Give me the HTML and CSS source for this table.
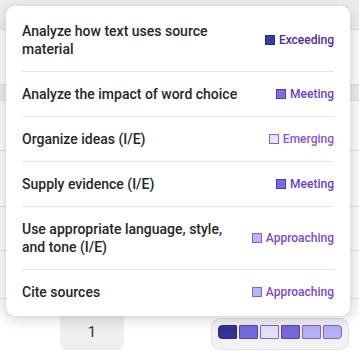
FILE: index.html
```html
<!DOCTYPE html>
<html>
<head>
<meta charset="utf-8">
<link rel="stylesheet" href="styles.css">
</head>
<body>
<div class="page">
  <div class="bg-table">
    <div class="bg-row bg-head"></div>
    <div class="bg-row r55"></div>
    <div class="bg-row r15 shade"></div>
    <div class="bg-row r50"></div>
    <div class="bg-row r56"></div>
    <div class="bg-row r42"></div>
    <div class="bg-row r48"></div>
    <div class="bg-row r20"></div>
  </div>
  <div class="footer">
    <div class="page-cell">1</div>
    <div class="legend">
      <span class="sq s-exc first"></span>
      <span class="sq s-meet"></span>
      <span class="sq s-emer"></span>
      <span class="sq s-meet"></span>
      <span class="sq s-appr"></span>
      <span class="sq s-appr last"></span>
    </div>
  </div>

  <div class="popover">
    <div class="row">
      <div class="skill">Analyze how text uses source material</div>
      <div class="level exc"><span class="box b-exc"></span>Exceeding</div>
    </div>
    <div class="row">
      <div class="skill">Analyze the impact of word choice</div>
      <div class="level meet"><span class="box b-meet"></span>Meeting</div>
    </div>
    <div class="row">
      <div class="skill">Organize ideas (I/E)</div>
      <div class="level emer"><span class="box b-emer"></span>Emerging</div>
    </div>
    <div class="row">
      <div class="skill">Supply evidence (I/E)</div>
      <div class="level meet"><span class="box b-meet"></span>Meeting</div>
    </div>
    <div class="row">
      <div class="skill">Use appropriate language, style, and tone (I/E)</div>
      <div class="level appr"><span class="box b-appr"></span>Approaching</div>
    </div>
    <div class="row">
      <div class="skill">Cite sources</div>
      <div class="level appr"><span class="box b-appr"></span>Approaching</div>
    </div>
  </div>
</div>
</body>
</html>
```

FILE: styles.css
```css
* { box-sizing: border-box; }
html, body {
  margin: 0;
  padding: 0;
  background: #ffffff;
  font-family: Roboto, "Liberation Sans", sans-serif;
}
.page {
  position: relative;
  width: 359px;
  height: 354px;
  overflow: hidden;
  background: #ffffff;
}
.bg-table {
  display: flex;
  flex-direction: column;
  height: 316px;
}
.bg-row {
  border-bottom: 1px solid #dcdce0;
  background: #fafafa;
}
.bg-head { height: 30px; background: #ececee; }
.r55 { height: 55px; }
.r15 { height: 16px; }
.shade { background: #e9e9ec; }
.r50 { height: 50px; }
.r56 { height: 56px; }
.r42 { height: 44px; }
.r48 { height: 48px; }
.r20 { height: 17px; border-bottom: none; }

.footer {
  display: flex;
  align-items: flex-start;
  padding-left: 60px;
}
.page-cell {
  width: 64px;
  height: 34px;
  background: #efeff1;
  border-radius: 0 0 7px 7px;
  display: flex;
  align-items: center;
  justify-content: center;
  font-size: 15px;
  color: #333;
  padding-bottom: 2px;
}
.legend {
  margin-left: 87px;
  margin-top: 2px;
  display: flex;
  gap: 2px;
  padding: 6px 6px 10px 6px;
  background: #f2f2f4;
  border: 1px solid #e3e3e7;
  border-radius: 9px;
}
.sq {
  width: 19px;
  height: 14px;
  border: 1px solid;
  border-radius: 1px;
}
.sq.first { border-radius: 4px 1px 1px 4px; }
.sq.last { border-radius: 1px 4px 4px 1px; }
.s-exc { background: #323392; border-color: #2a2a82; }
.s-meet { background: #736ad9; border-color: #5b3ec2; }
.s-emer { background: #e1e1fa; border-color: #8a5cd8; }
.s-appr { background: #b3b1f5; border-color: #8a5cd8; }

.popover {
  position: absolute;
  left: 6px;
  top: 6px;
  width: 344px;
  background: #ffffff;
  border-radius: 9px;
  padding: 3px 16px 2px 16px;
  box-shadow: 0 4px 14px rgba(0, 0, 0, 0.16), 0 0 3px rgba(0, 0, 0, 0.06);
}
.row {
  display: flex;
  align-items: center;
  justify-content: space-between;
  gap: 24px;
  padding: 13px 0;
  border-bottom: 1px solid #e4e4e7;
}
.row:last-child { border-bottom: none; }
.skill {
  flex: 1;
  font-size: 14px;
  line-height: 18px;
  font-weight: 500;
  color: #26272b;
}
.level {
  display: flex;
  align-items: center;
  gap: 4px;
  font-size: 12px;
  font-weight: 500;
  white-space: nowrap;
}
.box {
  width: 10px;
  height: 10px;
  border: 1px solid;
}
.exc { color: #4b2aa6; }
.meet { color: #6a3bcf; }
.emer { color: #8a56da; }
.appr { color: #7e48d4; }
.b-exc { background: #393aa0; border-color: #2b2b80; }
.b-meet { background: #7a6ee2; border-color: #5a35c2; }
.b-emer { background: #e4e4fb; border-color: #8a5cd8; }
.b-appr { background: #b8b5f7; border-color: #8a5cd8; }
```
